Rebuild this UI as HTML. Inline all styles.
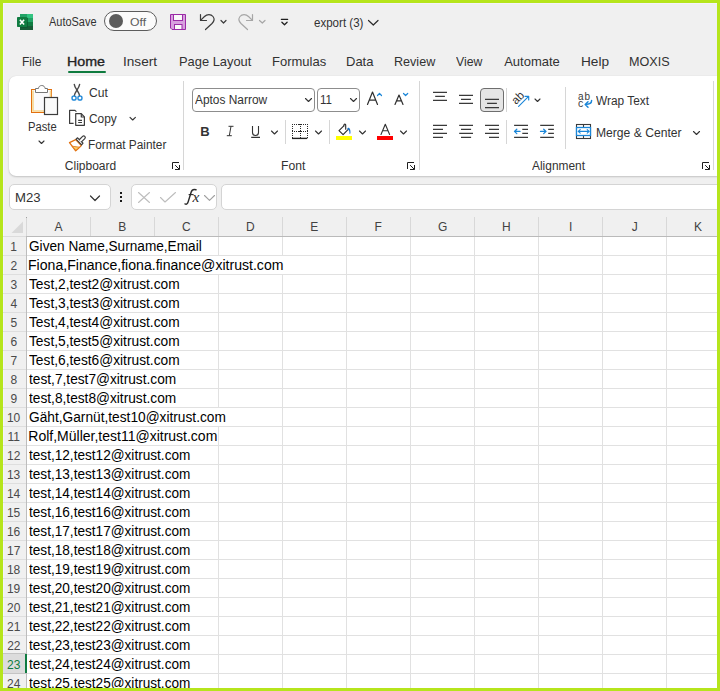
<!DOCTYPE html>
<html><head><meta charset="utf-8">
<style>
*{margin:0;padding:0;box-sizing:border-box}
html,body{width:720px;height:691px;overflow:hidden;background:#f0f0f0;font-family:"Liberation Sans",sans-serif;color:#242424}
.a{position:absolute}
.t{position:absolute;white-space:nowrap;line-height:1;transform-origin:0 0}
</style></head><body>
<div class="a" style="left:3px;top:3px;width:714px;height:1px;background:#f5f3fa"></div>
<div class="a" style="left:3px;top:3px;width:1px;height:685px;background:#f5f3fa"></div>
<div class="a" style="left:104px;top:11px;width:53px;height:20px;background:#fbfbfb;border-radius:10px"></div>
<div class="a" style="left:9px;top:76px;width:760px;height:100px;background:#fff;border-radius:7px;box-shadow:0 1px 2px rgba(0,0,0,0.18),0 0 1px rgba(0,0,0,0.12)"></div>
<div class="a" style="left:192px;top:88px;width:123px;height:24px;border:1px solid #8d8d8d;border-radius:4px;background:#fff"></div>
<div class="a" style="left:317px;top:88px;width:43px;height:24px;border:1px solid #8d8d8d;border-radius:4px;background:#fff"></div>
<div class="a" style="left:480px;top:88px;width:24px;height:24px;border:1px solid #6e6e6e;border-radius:4px;background:#e5e5e5"></div>
<div class="a" style="left:183px;top:81px;width:1px;height:89px;background:#d6d6d6"></div>
<div class="a" style="left:419px;top:81px;width:1px;height:89px;background:#d6d6d6"></div>
<div class="a" style="left:565px;top:87px;width:1px;height:62px;background:#d6d6d6"></div>
<div class="a" style="left:713px;top:81px;width:1px;height:89px;background:#d6d6d6"></div>
<div class="a" style="left:285px;top:120px;width:1px;height:24px;background:#d6d6d6"></div>
<div class="a" style="left:329px;top:120px;width:1px;height:24px;background:#d6d6d6"></div>
<div class="a" style="left:506px;top:88px;width:1px;height:24px;background:#d6d6d6"></div>
<div class="a" style="left:506px;top:120px;width:1px;height:24px;background:#d6d6d6"></div>
<div class="a" style="left:9px;top:184px;width:102px;height:26px;border:1px solid #d4d4d4;border-radius:5px;background:#fff"></div>
<div class="a" style="left:131px;top:184px;width:86px;height:26px;border:1px solid #d4d4d4;border-radius:5px;background:#fff"></div>
<div class="a" style="left:221px;top:184px;width:520px;height:26px;border:1px solid #d4d4d4;border-radius:5px;background:#fff"></div>
<div class="a" style="left:26px;top:236px;width:700px;height:460px;background:#fff"></div>
<div class="a" style="left:27px;top:255px;width:700px;height:1px;background:#e1e1e1"></div>
<div class="a" style="left:3px;top:255px;width:23px;height:1px;background:#dedede"></div>
<div class="a" style="left:27px;top:274px;width:700px;height:1px;background:#e1e1e1"></div>
<div class="a" style="left:3px;top:274px;width:23px;height:1px;background:#dedede"></div>
<div class="a" style="left:27px;top:293px;width:700px;height:1px;background:#e1e1e1"></div>
<div class="a" style="left:3px;top:293px;width:23px;height:1px;background:#dedede"></div>
<div class="a" style="left:27px;top:312px;width:700px;height:1px;background:#e1e1e1"></div>
<div class="a" style="left:3px;top:312px;width:23px;height:1px;background:#dedede"></div>
<div class="a" style="left:27px;top:331px;width:700px;height:1px;background:#e1e1e1"></div>
<div class="a" style="left:3px;top:331px;width:23px;height:1px;background:#dedede"></div>
<div class="a" style="left:27px;top:350px;width:700px;height:1px;background:#e1e1e1"></div>
<div class="a" style="left:3px;top:350px;width:23px;height:1px;background:#dedede"></div>
<div class="a" style="left:27px;top:369px;width:700px;height:1px;background:#e1e1e1"></div>
<div class="a" style="left:3px;top:369px;width:23px;height:1px;background:#dedede"></div>
<div class="a" style="left:27px;top:388px;width:700px;height:1px;background:#e1e1e1"></div>
<div class="a" style="left:3px;top:388px;width:23px;height:1px;background:#dedede"></div>
<div class="a" style="left:27px;top:407px;width:700px;height:1px;background:#e1e1e1"></div>
<div class="a" style="left:3px;top:407px;width:23px;height:1px;background:#dedede"></div>
<div class="a" style="left:27px;top:426px;width:700px;height:1px;background:#e1e1e1"></div>
<div class="a" style="left:3px;top:426px;width:23px;height:1px;background:#dedede"></div>
<div class="a" style="left:27px;top:445px;width:700px;height:1px;background:#e1e1e1"></div>
<div class="a" style="left:3px;top:445px;width:23px;height:1px;background:#dedede"></div>
<div class="a" style="left:27px;top:464px;width:700px;height:1px;background:#e1e1e1"></div>
<div class="a" style="left:3px;top:464px;width:23px;height:1px;background:#dedede"></div>
<div class="a" style="left:27px;top:483px;width:700px;height:1px;background:#e1e1e1"></div>
<div class="a" style="left:3px;top:483px;width:23px;height:1px;background:#dedede"></div>
<div class="a" style="left:27px;top:502px;width:700px;height:1px;background:#e1e1e1"></div>
<div class="a" style="left:3px;top:502px;width:23px;height:1px;background:#dedede"></div>
<div class="a" style="left:27px;top:521px;width:700px;height:1px;background:#e1e1e1"></div>
<div class="a" style="left:3px;top:521px;width:23px;height:1px;background:#dedede"></div>
<div class="a" style="left:27px;top:540px;width:700px;height:1px;background:#e1e1e1"></div>
<div class="a" style="left:3px;top:540px;width:23px;height:1px;background:#dedede"></div>
<div class="a" style="left:27px;top:559px;width:700px;height:1px;background:#e1e1e1"></div>
<div class="a" style="left:3px;top:559px;width:23px;height:1px;background:#dedede"></div>
<div class="a" style="left:27px;top:578px;width:700px;height:1px;background:#e1e1e1"></div>
<div class="a" style="left:3px;top:578px;width:23px;height:1px;background:#dedede"></div>
<div class="a" style="left:27px;top:597px;width:700px;height:1px;background:#e1e1e1"></div>
<div class="a" style="left:3px;top:597px;width:23px;height:1px;background:#dedede"></div>
<div class="a" style="left:27px;top:616px;width:700px;height:1px;background:#e1e1e1"></div>
<div class="a" style="left:3px;top:616px;width:23px;height:1px;background:#dedede"></div>
<div class="a" style="left:27px;top:635px;width:700px;height:1px;background:#e1e1e1"></div>
<div class="a" style="left:3px;top:635px;width:23px;height:1px;background:#dedede"></div>
<div class="a" style="left:27px;top:654px;width:700px;height:1px;background:#e1e1e1"></div>
<div class="a" style="left:3px;top:654px;width:23px;height:1px;background:#dedede"></div>
<div class="a" style="left:27px;top:673px;width:700px;height:1px;background:#e1e1e1"></div>
<div class="a" style="left:3px;top:673px;width:23px;height:1px;background:#dedede"></div>
<div class="a" style="left:27px;top:692px;width:700px;height:1px;background:#e1e1e1"></div>
<div class="a" style="left:3px;top:692px;width:23px;height:1px;background:#dedede"></div>
<div class="a" style="left:90px;top:217px;width:1px;height:19px;background:#d8d8d8"></div>
<div class="a" style="left:154px;top:217px;width:1px;height:19px;background:#d8d8d8"></div>
<div class="a" style="left:218px;top:217px;width:1px;height:19px;background:#d8d8d8"></div>
<div class="a" style="left:218px;top:237px;width:1px;height:18px;background:#e1e1e1"></div>
<div class="a" style="left:218px;top:275px;width:1px;height:18px;background:#e1e1e1"></div>
<div class="a" style="left:218px;top:294px;width:1px;height:18px;background:#e1e1e1"></div>
<div class="a" style="left:218px;top:313px;width:1px;height:18px;background:#e1e1e1"></div>
<div class="a" style="left:218px;top:332px;width:1px;height:18px;background:#e1e1e1"></div>
<div class="a" style="left:218px;top:351px;width:1px;height:18px;background:#e1e1e1"></div>
<div class="a" style="left:218px;top:370px;width:1px;height:18px;background:#e1e1e1"></div>
<div class="a" style="left:218px;top:389px;width:1px;height:18px;background:#e1e1e1"></div>
<div class="a" style="left:218px;top:427px;width:1px;height:18px;background:#e1e1e1"></div>
<div class="a" style="left:218px;top:446px;width:1px;height:18px;background:#e1e1e1"></div>
<div class="a" style="left:218px;top:465px;width:1px;height:18px;background:#e1e1e1"></div>
<div class="a" style="left:218px;top:484px;width:1px;height:18px;background:#e1e1e1"></div>
<div class="a" style="left:218px;top:503px;width:1px;height:18px;background:#e1e1e1"></div>
<div class="a" style="left:218px;top:522px;width:1px;height:18px;background:#e1e1e1"></div>
<div class="a" style="left:218px;top:541px;width:1px;height:18px;background:#e1e1e1"></div>
<div class="a" style="left:218px;top:560px;width:1px;height:18px;background:#e1e1e1"></div>
<div class="a" style="left:218px;top:579px;width:1px;height:18px;background:#e1e1e1"></div>
<div class="a" style="left:218px;top:598px;width:1px;height:18px;background:#e1e1e1"></div>
<div class="a" style="left:218px;top:617px;width:1px;height:18px;background:#e1e1e1"></div>
<div class="a" style="left:218px;top:636px;width:1px;height:18px;background:#e1e1e1"></div>
<div class="a" style="left:218px;top:655px;width:1px;height:18px;background:#e1e1e1"></div>
<div class="a" style="left:218px;top:674px;width:1px;height:18px;background:#e1e1e1"></div>
<div class="a" style="left:282px;top:217px;width:1px;height:19px;background:#d8d8d8"></div>
<div class="a" style="left:282px;top:237px;width:1px;height:18px;background:#e1e1e1"></div>
<div class="a" style="left:282px;top:275px;width:1px;height:18px;background:#e1e1e1"></div>
<div class="a" style="left:282px;top:294px;width:1px;height:18px;background:#e1e1e1"></div>
<div class="a" style="left:282px;top:313px;width:1px;height:18px;background:#e1e1e1"></div>
<div class="a" style="left:282px;top:332px;width:1px;height:18px;background:#e1e1e1"></div>
<div class="a" style="left:282px;top:351px;width:1px;height:18px;background:#e1e1e1"></div>
<div class="a" style="left:282px;top:370px;width:1px;height:18px;background:#e1e1e1"></div>
<div class="a" style="left:282px;top:389px;width:1px;height:18px;background:#e1e1e1"></div>
<div class="a" style="left:282px;top:408px;width:1px;height:18px;background:#e1e1e1"></div>
<div class="a" style="left:282px;top:427px;width:1px;height:18px;background:#e1e1e1"></div>
<div class="a" style="left:282px;top:446px;width:1px;height:18px;background:#e1e1e1"></div>
<div class="a" style="left:282px;top:465px;width:1px;height:18px;background:#e1e1e1"></div>
<div class="a" style="left:282px;top:484px;width:1px;height:18px;background:#e1e1e1"></div>
<div class="a" style="left:282px;top:503px;width:1px;height:18px;background:#e1e1e1"></div>
<div class="a" style="left:282px;top:522px;width:1px;height:18px;background:#e1e1e1"></div>
<div class="a" style="left:282px;top:541px;width:1px;height:18px;background:#e1e1e1"></div>
<div class="a" style="left:282px;top:560px;width:1px;height:18px;background:#e1e1e1"></div>
<div class="a" style="left:282px;top:579px;width:1px;height:18px;background:#e1e1e1"></div>
<div class="a" style="left:282px;top:598px;width:1px;height:18px;background:#e1e1e1"></div>
<div class="a" style="left:282px;top:617px;width:1px;height:18px;background:#e1e1e1"></div>
<div class="a" style="left:282px;top:636px;width:1px;height:18px;background:#e1e1e1"></div>
<div class="a" style="left:282px;top:655px;width:1px;height:18px;background:#e1e1e1"></div>
<div class="a" style="left:282px;top:674px;width:1px;height:18px;background:#e1e1e1"></div>
<div class="a" style="left:346px;top:217px;width:1px;height:19px;background:#d8d8d8"></div>
<div class="a" style="left:346px;top:237px;width:1px;height:18px;background:#e1e1e1"></div>
<div class="a" style="left:346px;top:256px;width:1px;height:18px;background:#e1e1e1"></div>
<div class="a" style="left:346px;top:275px;width:1px;height:18px;background:#e1e1e1"></div>
<div class="a" style="left:346px;top:294px;width:1px;height:18px;background:#e1e1e1"></div>
<div class="a" style="left:346px;top:313px;width:1px;height:18px;background:#e1e1e1"></div>
<div class="a" style="left:346px;top:332px;width:1px;height:18px;background:#e1e1e1"></div>
<div class="a" style="left:346px;top:351px;width:1px;height:18px;background:#e1e1e1"></div>
<div class="a" style="left:346px;top:370px;width:1px;height:18px;background:#e1e1e1"></div>
<div class="a" style="left:346px;top:389px;width:1px;height:18px;background:#e1e1e1"></div>
<div class="a" style="left:346px;top:408px;width:1px;height:18px;background:#e1e1e1"></div>
<div class="a" style="left:346px;top:427px;width:1px;height:18px;background:#e1e1e1"></div>
<div class="a" style="left:346px;top:446px;width:1px;height:18px;background:#e1e1e1"></div>
<div class="a" style="left:346px;top:465px;width:1px;height:18px;background:#e1e1e1"></div>
<div class="a" style="left:346px;top:484px;width:1px;height:18px;background:#e1e1e1"></div>
<div class="a" style="left:346px;top:503px;width:1px;height:18px;background:#e1e1e1"></div>
<div class="a" style="left:346px;top:522px;width:1px;height:18px;background:#e1e1e1"></div>
<div class="a" style="left:346px;top:541px;width:1px;height:18px;background:#e1e1e1"></div>
<div class="a" style="left:346px;top:560px;width:1px;height:18px;background:#e1e1e1"></div>
<div class="a" style="left:346px;top:579px;width:1px;height:18px;background:#e1e1e1"></div>
<div class="a" style="left:346px;top:598px;width:1px;height:18px;background:#e1e1e1"></div>
<div class="a" style="left:346px;top:617px;width:1px;height:18px;background:#e1e1e1"></div>
<div class="a" style="left:346px;top:636px;width:1px;height:18px;background:#e1e1e1"></div>
<div class="a" style="left:346px;top:655px;width:1px;height:18px;background:#e1e1e1"></div>
<div class="a" style="left:346px;top:674px;width:1px;height:18px;background:#e1e1e1"></div>
<div class="a" style="left:410px;top:217px;width:1px;height:19px;background:#d8d8d8"></div>
<div class="a" style="left:410px;top:237px;width:1px;height:18px;background:#e1e1e1"></div>
<div class="a" style="left:410px;top:256px;width:1px;height:18px;background:#e1e1e1"></div>
<div class="a" style="left:410px;top:275px;width:1px;height:18px;background:#e1e1e1"></div>
<div class="a" style="left:410px;top:294px;width:1px;height:18px;background:#e1e1e1"></div>
<div class="a" style="left:410px;top:313px;width:1px;height:18px;background:#e1e1e1"></div>
<div class="a" style="left:410px;top:332px;width:1px;height:18px;background:#e1e1e1"></div>
<div class="a" style="left:410px;top:351px;width:1px;height:18px;background:#e1e1e1"></div>
<div class="a" style="left:410px;top:370px;width:1px;height:18px;background:#e1e1e1"></div>
<div class="a" style="left:410px;top:389px;width:1px;height:18px;background:#e1e1e1"></div>
<div class="a" style="left:410px;top:408px;width:1px;height:18px;background:#e1e1e1"></div>
<div class="a" style="left:410px;top:427px;width:1px;height:18px;background:#e1e1e1"></div>
<div class="a" style="left:410px;top:446px;width:1px;height:18px;background:#e1e1e1"></div>
<div class="a" style="left:410px;top:465px;width:1px;height:18px;background:#e1e1e1"></div>
<div class="a" style="left:410px;top:484px;width:1px;height:18px;background:#e1e1e1"></div>
<div class="a" style="left:410px;top:503px;width:1px;height:18px;background:#e1e1e1"></div>
<div class="a" style="left:410px;top:522px;width:1px;height:18px;background:#e1e1e1"></div>
<div class="a" style="left:410px;top:541px;width:1px;height:18px;background:#e1e1e1"></div>
<div class="a" style="left:410px;top:560px;width:1px;height:18px;background:#e1e1e1"></div>
<div class="a" style="left:410px;top:579px;width:1px;height:18px;background:#e1e1e1"></div>
<div class="a" style="left:410px;top:598px;width:1px;height:18px;background:#e1e1e1"></div>
<div class="a" style="left:410px;top:617px;width:1px;height:18px;background:#e1e1e1"></div>
<div class="a" style="left:410px;top:636px;width:1px;height:18px;background:#e1e1e1"></div>
<div class="a" style="left:410px;top:655px;width:1px;height:18px;background:#e1e1e1"></div>
<div class="a" style="left:410px;top:674px;width:1px;height:18px;background:#e1e1e1"></div>
<div class="a" style="left:474px;top:217px;width:1px;height:19px;background:#d8d8d8"></div>
<div class="a" style="left:474px;top:237px;width:1px;height:18px;background:#e1e1e1"></div>
<div class="a" style="left:474px;top:256px;width:1px;height:18px;background:#e1e1e1"></div>
<div class="a" style="left:474px;top:275px;width:1px;height:18px;background:#e1e1e1"></div>
<div class="a" style="left:474px;top:294px;width:1px;height:18px;background:#e1e1e1"></div>
<div class="a" style="left:474px;top:313px;width:1px;height:18px;background:#e1e1e1"></div>
<div class="a" style="left:474px;top:332px;width:1px;height:18px;background:#e1e1e1"></div>
<div class="a" style="left:474px;top:351px;width:1px;height:18px;background:#e1e1e1"></div>
<div class="a" style="left:474px;top:370px;width:1px;height:18px;background:#e1e1e1"></div>
<div class="a" style="left:474px;top:389px;width:1px;height:18px;background:#e1e1e1"></div>
<div class="a" style="left:474px;top:408px;width:1px;height:18px;background:#e1e1e1"></div>
<div class="a" style="left:474px;top:427px;width:1px;height:18px;background:#e1e1e1"></div>
<div class="a" style="left:474px;top:446px;width:1px;height:18px;background:#e1e1e1"></div>
<div class="a" style="left:474px;top:465px;width:1px;height:18px;background:#e1e1e1"></div>
<div class="a" style="left:474px;top:484px;width:1px;height:18px;background:#e1e1e1"></div>
<div class="a" style="left:474px;top:503px;width:1px;height:18px;background:#e1e1e1"></div>
<div class="a" style="left:474px;top:522px;width:1px;height:18px;background:#e1e1e1"></div>
<div class="a" style="left:474px;top:541px;width:1px;height:18px;background:#e1e1e1"></div>
<div class="a" style="left:474px;top:560px;width:1px;height:18px;background:#e1e1e1"></div>
<div class="a" style="left:474px;top:579px;width:1px;height:18px;background:#e1e1e1"></div>
<div class="a" style="left:474px;top:598px;width:1px;height:18px;background:#e1e1e1"></div>
<div class="a" style="left:474px;top:617px;width:1px;height:18px;background:#e1e1e1"></div>
<div class="a" style="left:474px;top:636px;width:1px;height:18px;background:#e1e1e1"></div>
<div class="a" style="left:474px;top:655px;width:1px;height:18px;background:#e1e1e1"></div>
<div class="a" style="left:474px;top:674px;width:1px;height:18px;background:#e1e1e1"></div>
<div class="a" style="left:538px;top:217px;width:1px;height:19px;background:#d8d8d8"></div>
<div class="a" style="left:538px;top:237px;width:1px;height:18px;background:#e1e1e1"></div>
<div class="a" style="left:538px;top:256px;width:1px;height:18px;background:#e1e1e1"></div>
<div class="a" style="left:538px;top:275px;width:1px;height:18px;background:#e1e1e1"></div>
<div class="a" style="left:538px;top:294px;width:1px;height:18px;background:#e1e1e1"></div>
<div class="a" style="left:538px;top:313px;width:1px;height:18px;background:#e1e1e1"></div>
<div class="a" style="left:538px;top:332px;width:1px;height:18px;background:#e1e1e1"></div>
<div class="a" style="left:538px;top:351px;width:1px;height:18px;background:#e1e1e1"></div>
<div class="a" style="left:538px;top:370px;width:1px;height:18px;background:#e1e1e1"></div>
<div class="a" style="left:538px;top:389px;width:1px;height:18px;background:#e1e1e1"></div>
<div class="a" style="left:538px;top:408px;width:1px;height:18px;background:#e1e1e1"></div>
<div class="a" style="left:538px;top:427px;width:1px;height:18px;background:#e1e1e1"></div>
<div class="a" style="left:538px;top:446px;width:1px;height:18px;background:#e1e1e1"></div>
<div class="a" style="left:538px;top:465px;width:1px;height:18px;background:#e1e1e1"></div>
<div class="a" style="left:538px;top:484px;width:1px;height:18px;background:#e1e1e1"></div>
<div class="a" style="left:538px;top:503px;width:1px;height:18px;background:#e1e1e1"></div>
<div class="a" style="left:538px;top:522px;width:1px;height:18px;background:#e1e1e1"></div>
<div class="a" style="left:538px;top:541px;width:1px;height:18px;background:#e1e1e1"></div>
<div class="a" style="left:538px;top:560px;width:1px;height:18px;background:#e1e1e1"></div>
<div class="a" style="left:538px;top:579px;width:1px;height:18px;background:#e1e1e1"></div>
<div class="a" style="left:538px;top:598px;width:1px;height:18px;background:#e1e1e1"></div>
<div class="a" style="left:538px;top:617px;width:1px;height:18px;background:#e1e1e1"></div>
<div class="a" style="left:538px;top:636px;width:1px;height:18px;background:#e1e1e1"></div>
<div class="a" style="left:538px;top:655px;width:1px;height:18px;background:#e1e1e1"></div>
<div class="a" style="left:538px;top:674px;width:1px;height:18px;background:#e1e1e1"></div>
<div class="a" style="left:602px;top:217px;width:1px;height:19px;background:#d8d8d8"></div>
<div class="a" style="left:602px;top:237px;width:1px;height:18px;background:#e1e1e1"></div>
<div class="a" style="left:602px;top:256px;width:1px;height:18px;background:#e1e1e1"></div>
<div class="a" style="left:602px;top:275px;width:1px;height:18px;background:#e1e1e1"></div>
<div class="a" style="left:602px;top:294px;width:1px;height:18px;background:#e1e1e1"></div>
<div class="a" style="left:602px;top:313px;width:1px;height:18px;background:#e1e1e1"></div>
<div class="a" style="left:602px;top:332px;width:1px;height:18px;background:#e1e1e1"></div>
<div class="a" style="left:602px;top:351px;width:1px;height:18px;background:#e1e1e1"></div>
<div class="a" style="left:602px;top:370px;width:1px;height:18px;background:#e1e1e1"></div>
<div class="a" style="left:602px;top:389px;width:1px;height:18px;background:#e1e1e1"></div>
<div class="a" style="left:602px;top:408px;width:1px;height:18px;background:#e1e1e1"></div>
<div class="a" style="left:602px;top:427px;width:1px;height:18px;background:#e1e1e1"></div>
<div class="a" style="left:602px;top:446px;width:1px;height:18px;background:#e1e1e1"></div>
<div class="a" style="left:602px;top:465px;width:1px;height:18px;background:#e1e1e1"></div>
<div class="a" style="left:602px;top:484px;width:1px;height:18px;background:#e1e1e1"></div>
<div class="a" style="left:602px;top:503px;width:1px;height:18px;background:#e1e1e1"></div>
<div class="a" style="left:602px;top:522px;width:1px;height:18px;background:#e1e1e1"></div>
<div class="a" style="left:602px;top:541px;width:1px;height:18px;background:#e1e1e1"></div>
<div class="a" style="left:602px;top:560px;width:1px;height:18px;background:#e1e1e1"></div>
<div class="a" style="left:602px;top:579px;width:1px;height:18px;background:#e1e1e1"></div>
<div class="a" style="left:602px;top:598px;width:1px;height:18px;background:#e1e1e1"></div>
<div class="a" style="left:602px;top:617px;width:1px;height:18px;background:#e1e1e1"></div>
<div class="a" style="left:602px;top:636px;width:1px;height:18px;background:#e1e1e1"></div>
<div class="a" style="left:602px;top:655px;width:1px;height:18px;background:#e1e1e1"></div>
<div class="a" style="left:602px;top:674px;width:1px;height:18px;background:#e1e1e1"></div>
<div class="a" style="left:666px;top:217px;width:1px;height:19px;background:#d8d8d8"></div>
<div class="a" style="left:666px;top:237px;width:1px;height:18px;background:#e1e1e1"></div>
<div class="a" style="left:666px;top:256px;width:1px;height:18px;background:#e1e1e1"></div>
<div class="a" style="left:666px;top:275px;width:1px;height:18px;background:#e1e1e1"></div>
<div class="a" style="left:666px;top:294px;width:1px;height:18px;background:#e1e1e1"></div>
<div class="a" style="left:666px;top:313px;width:1px;height:18px;background:#e1e1e1"></div>
<div class="a" style="left:666px;top:332px;width:1px;height:18px;background:#e1e1e1"></div>
<div class="a" style="left:666px;top:351px;width:1px;height:18px;background:#e1e1e1"></div>
<div class="a" style="left:666px;top:370px;width:1px;height:18px;background:#e1e1e1"></div>
<div class="a" style="left:666px;top:389px;width:1px;height:18px;background:#e1e1e1"></div>
<div class="a" style="left:666px;top:408px;width:1px;height:18px;background:#e1e1e1"></div>
<div class="a" style="left:666px;top:427px;width:1px;height:18px;background:#e1e1e1"></div>
<div class="a" style="left:666px;top:446px;width:1px;height:18px;background:#e1e1e1"></div>
<div class="a" style="left:666px;top:465px;width:1px;height:18px;background:#e1e1e1"></div>
<div class="a" style="left:666px;top:484px;width:1px;height:18px;background:#e1e1e1"></div>
<div class="a" style="left:666px;top:503px;width:1px;height:18px;background:#e1e1e1"></div>
<div class="a" style="left:666px;top:522px;width:1px;height:18px;background:#e1e1e1"></div>
<div class="a" style="left:666px;top:541px;width:1px;height:18px;background:#e1e1e1"></div>
<div class="a" style="left:666px;top:560px;width:1px;height:18px;background:#e1e1e1"></div>
<div class="a" style="left:666px;top:579px;width:1px;height:18px;background:#e1e1e1"></div>
<div class="a" style="left:666px;top:598px;width:1px;height:18px;background:#e1e1e1"></div>
<div class="a" style="left:666px;top:617px;width:1px;height:18px;background:#e1e1e1"></div>
<div class="a" style="left:666px;top:636px;width:1px;height:18px;background:#e1e1e1"></div>
<div class="a" style="left:666px;top:655px;width:1px;height:18px;background:#e1e1e1"></div>
<div class="a" style="left:666px;top:674px;width:1px;height:18px;background:#e1e1e1"></div>
<div class="a" style="left:730px;top:217px;width:1px;height:19px;background:#d8d8d8"></div>
<div class="a" style="left:730px;top:237px;width:1px;height:18px;background:#e1e1e1"></div>
<div class="a" style="left:730px;top:256px;width:1px;height:18px;background:#e1e1e1"></div>
<div class="a" style="left:730px;top:275px;width:1px;height:18px;background:#e1e1e1"></div>
<div class="a" style="left:730px;top:294px;width:1px;height:18px;background:#e1e1e1"></div>
<div class="a" style="left:730px;top:313px;width:1px;height:18px;background:#e1e1e1"></div>
<div class="a" style="left:730px;top:332px;width:1px;height:18px;background:#e1e1e1"></div>
<div class="a" style="left:730px;top:351px;width:1px;height:18px;background:#e1e1e1"></div>
<div class="a" style="left:730px;top:370px;width:1px;height:18px;background:#e1e1e1"></div>
<div class="a" style="left:730px;top:389px;width:1px;height:18px;background:#e1e1e1"></div>
<div class="a" style="left:730px;top:408px;width:1px;height:18px;background:#e1e1e1"></div>
<div class="a" style="left:730px;top:427px;width:1px;height:18px;background:#e1e1e1"></div>
<div class="a" style="left:730px;top:446px;width:1px;height:18px;background:#e1e1e1"></div>
<div class="a" style="left:730px;top:465px;width:1px;height:18px;background:#e1e1e1"></div>
<div class="a" style="left:730px;top:484px;width:1px;height:18px;background:#e1e1e1"></div>
<div class="a" style="left:730px;top:503px;width:1px;height:18px;background:#e1e1e1"></div>
<div class="a" style="left:730px;top:522px;width:1px;height:18px;background:#e1e1e1"></div>
<div class="a" style="left:730px;top:541px;width:1px;height:18px;background:#e1e1e1"></div>
<div class="a" style="left:730px;top:560px;width:1px;height:18px;background:#e1e1e1"></div>
<div class="a" style="left:730px;top:579px;width:1px;height:18px;background:#e1e1e1"></div>
<div class="a" style="left:730px;top:598px;width:1px;height:18px;background:#e1e1e1"></div>
<div class="a" style="left:730px;top:617px;width:1px;height:18px;background:#e1e1e1"></div>
<div class="a" style="left:730px;top:636px;width:1px;height:18px;background:#e1e1e1"></div>
<div class="a" style="left:730px;top:655px;width:1px;height:18px;background:#e1e1e1"></div>
<div class="a" style="left:730px;top:674px;width:1px;height:18px;background:#e1e1e1"></div>
<div class="a" style="left:3px;top:236px;width:23px;height:1px;background:#dcdcdc"></div>
<div class="a" style="left:26px;top:236px;width:700px;height:1px;background:#bababa"></div>
<div class="a" style="left:26px;top:217px;width:1px;height:19px;background:#d8d8d8"></div>
<div class="a" style="left:26px;top:217px;width:1px;height:1px;background:#a0a0a0"></div>
<div class="a" style="left:26px;top:237px;width:1px;height:460px;background:#bdbdbd"></div>
<div class="a" style="left:3px;top:654px;width:23px;height:19px;background:#dcdcdc"></div>
<div class="a" style="left:3px;top:653px;width:23px;height:1px;background:#c4c4c4"></div>
<div class="a" style="left:3px;top:673px;width:23px;height:1px;background:#c4c4c4"></div>
<div class="a" style="left:25px;top:654px;width:2px;height:19px;background:#107c41"></div>
<div class="t" style="left:49.00px;top:15.84px;font-size:12px;color:#323232;transform:scaleX(0.9126)">AutoSave</div>
<div class="t" style="left:130.25px;top:16.69px;font-size:11px;color:#5c5c5c;transform:scaleX(1.1071)">Off</div>
<div class="t" style="left:314.27px;top:16.59px;font-size:12px;color:#323232;transform:scaleX(0.9622)">export (3)</div>
<div class="t" style="left:22.48px;top:54.99px;font-size:13px;color:#323232;transform:scaleX(0.9231)">File</div>
<div class="t" style="left:67.31px;top:54.99px;font-size:13px;color:#242424;-webkit-text-stroke:0.35px #242424;transform:scaleX(1.0947)">Home</div>
<div class="t" style="left:122.69px;top:54.99px;font-size:13px;color:#323232;transform:scaleX(1.0464)">Insert</div>
<div class="t" style="left:178.71px;top:54.99px;font-size:13px;color:#323232;transform:scaleX(0.9903)">Page Layout</div>
<div class="t" style="left:272.00px;top:54.99px;font-size:13px;color:#323232">Formulas</div>
<div class="t" style="left:346.00px;top:54.99px;font-size:13px;color:#323232">Data</div>
<div class="t" style="left:394.03px;top:54.99px;font-size:13px;color:#323232;transform:scaleX(0.9677)">Review</div>
<div class="t" style="left:455.60px;top:54.99px;font-size:13px;color:#323232;transform:scaleX(0.9429)">View</div>
<div class="t" style="left:504.20px;top:54.99px;font-size:13px;color:#323232">Automate</div>
<div class="t" style="left:580.95px;top:54.99px;font-size:13px;color:#323232;transform:scaleX(1.0495)">Help</div>
<div class="t" style="left:628.53px;top:54.99px;font-size:13px;color:#323232;transform:scaleX(0.9704)">MOXIS</div>
<div class="t" style="left:27.77px;top:120.64px;font-size:12px;color:#323232;transform:scaleX(0.9333)">Paste</div>
<div class="t" style="left:88.90px;top:87.04px;font-size:12px;color:#323232;transform:scaleX(1.0082)">Cut</div>
<div class="t" style="left:88.90px;top:113.34px;font-size:12px;color:#323232;transform:scaleX(0.9927)">Copy</div>
<div class="t" style="left:88.41px;top:139.04px;font-size:12px;color:#323232;transform:scaleX(0.9879)">Format Painter</div>
<div class="t" style="left:64.80px;top:159.84px;font-size:12px;color:#323232">Clipboard</div>
<div class="t" style="left:195.30px;top:93.64px;font-size:12px;color:#323232;transform:scaleX(0.9924)">Aptos Narrow</div>
<div class="t" style="left:319.98px;top:93.64px;font-size:12px;color:#323232;transform:scaleX(0.9600)">11</div>
<div class="t" style="left:281.39px;top:159.54px;font-size:12px;color:#323232;transform:scaleX(1.0130)">Font</div>
<div class="t" style="left:531.70px;top:159.84px;font-size:12px;color:#323232;transform:scaleX(0.9934)">Alignment</div>
<div class="t" style="left:596.00px;top:94.74px;font-size:12px;color:#323232;transform:scaleX(0.9888)">Wrap Text</div>
<div class="t" style="left:595.69px;top:127.14px;font-size:12px;color:#323232;transform:scaleX(1.0096)">Merge &amp; Center</div>
<div class="t" style="left:15.29px;top:190.69px;font-size:13px;color:#323232;transform:scaleX(1.0105)">M23</div>
<div class="t" style="left:54.50px;top:220.59px;font-size:12px;color:#424242">A</div>
<div class="t" style="left:118.25px;top:220.59px;font-size:12px;color:#424242">B</div>
<div class="t" style="left:182.12px;top:220.59px;font-size:12px;color:#424242">C</div>
<div class="t" style="left:245.88px;top:220.59px;font-size:12px;color:#424242">D</div>
<div class="t" style="left:310.25px;top:220.59px;font-size:12px;color:#424242">E</div>
<div class="t" style="left:374.50px;top:220.59px;font-size:12px;color:#424242">F</div>
<div class="t" style="left:438.00px;top:220.59px;font-size:12px;color:#424242">G</div>
<div class="t" style="left:502.12px;top:220.59px;font-size:12px;color:#424242">H</div>
<div class="t" style="left:568.88px;top:220.59px;font-size:12px;color:#424242">I</div>
<div class="t" style="left:631.75px;top:220.59px;font-size:12px;color:#424242">J</div>
<div class="t" style="left:694.00px;top:220.59px;font-size:12px;color:#424242">K</div>
<div class="t" style="left:10.30px;top:240.84px;font-size:12px;color:#4a4a4a">1</div>
<div class="t" style="left:28.57px;top:239.15px;font-size:14px;color:#000000;transform:scaleX(0.9735)">Given Name,Surname,Email</div>
<div class="t" style="left:10.43px;top:259.84px;font-size:12px;color:#4a4a4a">2</div>
<div class="t" style="left:28.29px;top:258.15px;font-size:14px;color:#000000;transform:scaleX(1.0063)">Fiona,Finance,fiona.finance@xitrust.com</div>
<div class="t" style="left:10.43px;top:278.84px;font-size:12px;color:#4a4a4a">3</div>
<div class="t" style="left:29.05px;top:277.15px;font-size:14px;color:#000000;transform:scaleX(0.9813)">Test,2,test2@xitrust.com</div>
<div class="t" style="left:10.43px;top:297.84px;font-size:12px;color:#4a4a4a">4</div>
<div class="t" style="left:29.05px;top:296.15px;font-size:14px;color:#000000;transform:scaleX(0.9813)">Test,3,test3@xitrust.com</div>
<div class="t" style="left:10.43px;top:316.84px;font-size:12px;color:#4a4a4a">5</div>
<div class="t" style="left:29.05px;top:315.15px;font-size:14px;color:#000000;transform:scaleX(0.9813)">Test,4,test4@xitrust.com</div>
<div class="t" style="left:10.43px;top:335.84px;font-size:12px;color:#4a4a4a">6</div>
<div class="t" style="left:29.05px;top:334.15px;font-size:14px;color:#000000;transform:scaleX(0.9813)">Test,5,test5@xitrust.com</div>
<div class="t" style="left:10.43px;top:354.84px;font-size:12px;color:#4a4a4a">7</div>
<div class="t" style="left:29.05px;top:353.15px;font-size:14px;color:#000000;transform:scaleX(0.9813)">Test,6,test6@xitrust.com</div>
<div class="t" style="left:10.43px;top:373.84px;font-size:12px;color:#4a4a4a">8</div>
<div class="t" style="left:29.06px;top:372.15px;font-size:14px;color:#000000;transform:scaleX(0.9789)">test,7,test7@xitrust.com</div>
<div class="t" style="left:10.43px;top:392.84px;font-size:12px;color:#4a4a4a">9</div>
<div class="t" style="left:29.06px;top:391.15px;font-size:14px;color:#000000;transform:scaleX(0.9789)">test,8,test8@xitrust.com</div>
<div class="t" style="left:6.93px;top:411.84px;font-size:12px;color:#4a4a4a">10</div>
<div class="t" style="left:28.57px;top:410.15px;font-size:14px;color:#000000;transform:scaleX(0.9797)">Gäht,Garnüt,test10@xitrust.com</div>
<div class="t" style="left:7.43px;top:430.84px;font-size:12px;color:#4a4a4a">11</div>
<div class="t" style="left:28.30px;top:429.15px;font-size:14px;color:#000000">Rolf,Müller,test11@xitrust.com</div>
<div class="t" style="left:7.05px;top:449.84px;font-size:12px;color:#4a4a4a">12</div>
<div class="t" style="left:29.06px;top:448.15px;font-size:14px;color:#000000;transform:scaleX(0.9724)">test,12,test12@xitrust.com</div>
<div class="t" style="left:6.93px;top:468.84px;font-size:12px;color:#4a4a4a">13</div>
<div class="t" style="left:29.06px;top:467.15px;font-size:14px;color:#000000;transform:scaleX(0.9724)">test,13,test13@xitrust.com</div>
<div class="t" style="left:6.93px;top:487.84px;font-size:12px;color:#4a4a4a">14</div>
<div class="t" style="left:29.06px;top:486.15px;font-size:14px;color:#000000;transform:scaleX(0.9724)">test,14,test14@xitrust.com</div>
<div class="t" style="left:6.93px;top:506.84px;font-size:12px;color:#4a4a4a">15</div>
<div class="t" style="left:29.06px;top:505.15px;font-size:14px;color:#000000;transform:scaleX(0.9724)">test,16,test16@xitrust.com</div>
<div class="t" style="left:6.93px;top:525.84px;font-size:12px;color:#4a4a4a">16</div>
<div class="t" style="left:29.06px;top:524.15px;font-size:14px;color:#000000;transform:scaleX(0.9724)">test,17,test17@xitrust.com</div>
<div class="t" style="left:7.05px;top:544.84px;font-size:12px;color:#4a4a4a">17</div>
<div class="t" style="left:29.06px;top:543.15px;font-size:14px;color:#000000;transform:scaleX(0.9724)">test,18,test18@xitrust.com</div>
<div class="t" style="left:6.93px;top:563.84px;font-size:12px;color:#4a4a4a">18</div>
<div class="t" style="left:29.06px;top:562.15px;font-size:14px;color:#000000;transform:scaleX(0.9724)">test,19,test19@xitrust.com</div>
<div class="t" style="left:6.93px;top:582.84px;font-size:12px;color:#4a4a4a">19</div>
<div class="t" style="left:29.06px;top:581.15px;font-size:14px;color:#000000;transform:scaleX(0.9724)">test,20,test20@xitrust.com</div>
<div class="t" style="left:7.05px;top:601.84px;font-size:12px;color:#4a4a4a">20</div>
<div class="t" style="left:29.06px;top:600.15px;font-size:14px;color:#000000;transform:scaleX(0.9724)">test,21,test21@xitrust.com</div>
<div class="t" style="left:7.05px;top:620.84px;font-size:12px;color:#4a4a4a">21</div>
<div class="t" style="left:29.06px;top:619.15px;font-size:14px;color:#000000;transform:scaleX(0.9724)">test,22,test22@xitrust.com</div>
<div class="t" style="left:7.18px;top:639.84px;font-size:12px;color:#4a4a4a">22</div>
<div class="t" style="left:29.06px;top:638.15px;font-size:14px;color:#000000;transform:scaleX(0.9724)">test,23,test23@xitrust.com</div>
<div class="t" style="left:7.05px;top:658.84px;font-size:12px;color:#107c41">23</div>
<div class="t" style="left:29.06px;top:657.15px;font-size:14px;color:#000000;transform:scaleX(0.9724)">test,24,test24@xitrust.com</div>
<div class="t" style="left:7.05px;top:677.84px;font-size:12px;color:#4a4a4a">24</div>
<div class="t" style="left:29.06px;top:676.15px;font-size:14px;color:#000000;transform:scaleX(0.9724)">test,25,test25@xitrust.com</div>
<svg style="position:absolute;left:0;top:0" width="720" height="691" viewBox="0 0 720 691">
<!-- excel logo -->
<rect x="20" y="14" width="13" height="16" rx="1" fill="#185c37"/>
<rect x="20" y="14" width="13" height="4" fill="#33c481"/>
<rect x="20" y="14" width="7" height="4" fill="#21a366"/>
<rect x="20" y="18" width="13" height="4" fill="#21a366"/>
<rect x="20" y="22" width="13" height="4" fill="#107c41"/>
<rect x="20" y="26" width="13" height="4" fill="#185c37"/>
<path d="M26.5 17.8 H27.7 V27.7 H20 V26.5 H26.5 Z" fill="#0b5530"/>
<rect x="17" y="17" width="10" height="10" rx="0.8" fill="#107c41"/>
<path d="M19.9 19.7 L24.1 24.5 M24.1 19.7 L19.9 24.5" stroke="#fff" stroke-width="1.6"/>
<!-- toggle -->
<rect x="104.5" y="11.5" width="52" height="19" rx="9.5" fill="none" stroke="#5c5c5c" stroke-width="1"/>
<circle cx="116" cy="21" r="7" fill="#5c5c5c"/>
<!-- save -->
<g>
  <path d="M170.5 14.5 H185.5 V29.5 H172 L170.5 28 Z" fill="#d8a0df" stroke="#9b2ba6" stroke-width="1"/>
  <rect x="173.5" y="14.5" width="9" height="6" fill="#fafafa" stroke="#9b2ba6" stroke-width="1"/>
  <rect x="174.5" y="24.5" width="7.5" height="5" fill="#fafafa" stroke="#9b2ba6" stroke-width="1"/>
</g>
<!-- undo -->
<g fill="none" stroke="#3b3b3b" stroke-width="1.2" stroke-linecap="round" stroke-linejoin="round">
  <path d="M200.5 14.5 V20.5 H206.5"/>
  <path d="M200.8 20.2 L204.5 16.5 C207 14 211 14 213 16.5 C215 19 214 21.5 212 23.5 L205.5 29.5"/>
  <path d="M221 20.5 L223.5 23 L226 20.5"/>
</g>
<!-- redo -->
<g fill="none" stroke="#a6a6a6" stroke-width="1.2" stroke-linecap="round" stroke-linejoin="round">
  <path d="M252.5 14.5 V20.5 H246.5"/>
  <path d="M252.2 20.2 L248.5 16.5 C246 14 242 14 240 16.5 C238 19 239 21.5 241 23.5 L247.5 29.5"/>
  <path d="M259.5 20.5 L262.3 23 L265 20.5"/>
</g>
<!-- customize -->
<g fill="none" stroke="#1f1f1f" stroke-width="1.3" stroke-linecap="round" stroke-linejoin="round">
  <path d="M281.4 19.4 H287.6"/>
  <path d="M281.9 22.2 L284.5 24.7 L287.1 22.2"/>
</g>
<!-- title chevron -->
<path d="M368.5 20.5 L373.3 25 L378 20.5" fill="none" stroke="#2b2b2b" stroke-width="1.2" stroke-linecap="round" stroke-linejoin="round"/>
<!-- Home underline -->
<rect x="68" y="71" width="38" height="2" rx="1" fill="#0f7b3f"/>

<!-- ===== PASTE ===== -->
<rect x="31.5" y="89.5" width="20" height="23" fill="#fafafc" stroke="#e2700f" stroke-width="1"/>
<path d="M33 90.5 V111 H50.5 V90.5" fill="none" stroke="#f7d690" stroke-width="1.6"/>
<path d="M35.5 88.5 H38.5 C38.5 84.5 45 84.5 45 88.5 H47.5 V92.5 H35.5 Z" fill="#fff" stroke="#777" stroke-width="1"/>
<rect x="44.5" y="97.5" width="13" height="17" fill="#fafafa" stroke="#3c3c3c" stroke-width="1.2"/>
<path d="M39 141 L41.5 143.5 L44 141" fill="none" stroke="#333" stroke-width="1.1" stroke-linecap="round" stroke-linejoin="round"/>
<!-- scissors -->
<g fill="none" stroke-linecap="round">
  <path d="M74.3 84.5 C74.6 88 79.2 92 79.6 95.8" stroke="#4a4a4a" stroke-width="1.45"/>
  <path d="M79.6 84.5 C79.2 88 74.6 92 74.3 95.8" stroke="#4a4a4a" stroke-width="1.45"/>
  <rect x="72.1" y="96.1" width="3.9" height="3.9" rx="1.2" stroke="#1a86d8" stroke-width="1.4"/>
  <rect x="78" y="96.1" width="3.9" height="3.9" rx="1.2" stroke="#1a86d8" stroke-width="1.4"/>
</g>
<!-- copy -->
<g fill="none" stroke="#3b3b3b" stroke-width="1.2" stroke-linejoin="round">
  <path d="M73.6 123.4 H69.6 V110.4 H75 L76.4 111.6"/>
  <path d="M75.7 113.7 H81.3 L84.4 116.8 V125.3 H75.7 Z" fill="#fff"/>
  <path d="M81.3 113.7 V117 H84.4"/>
  <path d="M78.2 120.4 H82 M78.2 122.5 H82"/>
</g>
<!-- format painter -->
<g stroke-linejoin="round">
  <path d="M69.5 142.6 C72 141.5 74 140.5 75.7 139.6 L81.3 145.6 C79.5 147.5 77.5 149.5 75.7 150.8 Z" fill="#fff" stroke="#e2700f" stroke-width="1.3"/>
  <path d="M72 146.2 L79.6 147.2 L75.9 150.2 Z" fill="#f7cf6a" stroke="#e2700f" stroke-width="0.8"/>
  <path d="M76 139.2 L77.6 137.8 L83 143.2 L81.6 144.8 Z" fill="#fff" stroke="#3b3b3b" stroke-width="1.2"/>
  <path d="M79 140 L82.6 136.4 C83.2 135.8 84.2 135.8 84.8 136.4 C85.4 137 85.4 138 84.8 138.6 L81.2 142.2" fill="#fff" stroke="#3b3b3b" stroke-width="1.2"/>
</g>
<!-- dialog launchers -->
<g fill="none" stroke="#1f1f1f" stroke-width="1" stroke-linecap="square">
  <path d="M172.5 168.5 V162.5 H178.5 M175.5 165.5 L179 169 M179.5 165.5 V169.5 H175.5"/>
  <path d="M407.5 168.5 V162.5 H413.5 M410.5 165.5 L414 169 M414.5 165.5 V169.5 H410.5"/>
  <path d="M702.5 168.5 V162.5 H708.5 M705.5 165.5 L709 169 M709.5 165.5 V169.5 H705.5"/>
</g>

<!-- ===== FONT GROUP ===== -->
<g fill="none" stroke="#333" stroke-width="1.1" stroke-linecap="round" stroke-linejoin="round">
  <path d="M305.5 98.5 L308.5 101.5 L311.5 98.5"/>
  <path d="M350.5 98.5 L353.5 101.5 L356.5 98.5"/>
  <path d="M271.5 131 L274.5 134 L277.5 131"/>
  <path d="M315.5 131 L318.5 134 L321.5 131"/>
  <path d="M359.5 131 L362.5 134 L365.5 131"/>
  <path d="M400.5 131 L403.5 134 L406.5 131"/>
  <path d="M535 99 L537.5 101.5 L540 99"/>
  <path d="M693.5 131.5 L696.5 134.5 L699.5 131.5"/>
  <path d="M130 117.3 L132.7 120 L135.4 117.3"/>
</g>
<!-- grow / shrink A -->
<g fill="none" stroke="#2f2f2f" stroke-width="1.2" stroke-linecap="round" stroke-linejoin="round">
  <path d="M367.5 104.5 L372.5 92 L377.5 104.5 M369.3 100.2 H375.7"/>
  <path d="M395 104.5 L399 95 L403 104.5 M396.4 100.8 H401.6"/>
</g>
<g fill="none" stroke="#1a86d8" stroke-width="1.2" stroke-linecap="round" stroke-linejoin="round">
  <path d="M377.5 95.5 L379.5 93.3 L381.5 95.5"/>
  <path d="M403.5 93.5 L405.6 95.5 L407.7 93.5"/>
</g>
<!-- B I U -->
<text x="200.3" y="136" font-family="Liberation Sans" font-weight="bold" font-size="13" fill="#333">B</text>
<path d="M228.5 126.3 H233.5 M226.8 135.7 H231.8 M231 126.3 L229.3 135.7" fill="none" stroke="#333" stroke-width="1"/>
<path d="M252.5 126 V132.5 C252.5 136.5 258.5 136.5 258.5 132.5 V126 M251.2 137.4 H260" fill="none" stroke="#333" stroke-width="1.1"/>
<!-- borders icon -->
<g fill="#2a2a2a"><rect x="292" y="124" width="1" height="1"/><rect x="292" y="126" width="1" height="1"/><rect x="292" y="128" width="1" height="1"/><rect x="292" y="130" width="1" height="1"/><rect x="292" y="131" width="1" height="1"/><rect x="292" y="133" width="1" height="1"/><rect x="292" y="135" width="1" height="1"/><rect x="292" y="137" width="1" height="1"/><rect x="294" y="124" width="1" height="1"/><rect x="294" y="131" width="1" height="1"/><rect x="296" y="124" width="1" height="1"/><rect x="296" y="131" width="1" height="1"/><rect x="298" y="124" width="1" height="1"/><rect x="298" y="131" width="1" height="1"/><rect x="299" y="124" width="1" height="1"/><rect x="299" y="131" width="1" height="1"/><rect x="300" y="124" width="1" height="1"/><rect x="300" y="126" width="1" height="1"/><rect x="300" y="128" width="1" height="1"/><rect x="300" y="130" width="1" height="1"/><rect x="300" y="131" width="1" height="1"/><rect x="300" y="133" width="1" height="1"/><rect x="300" y="135" width="1" height="1"/><rect x="300" y="137" width="1" height="1"/><rect x="301" y="124" width="1" height="1"/><rect x="301" y="131" width="1" height="1"/><rect x="303" y="124" width="1" height="1"/><rect x="303" y="131" width="1" height="1"/><rect x="305" y="124" width="1" height="1"/><rect x="305" y="131" width="1" height="1"/><rect x="307" y="124" width="1" height="1"/><rect x="307" y="126" width="1" height="1"/><rect x="307" y="128" width="1" height="1"/><rect x="307" y="130" width="1" height="1"/><rect x="307" y="131" width="1" height="1"/><rect x="307" y="133" width="1" height="1"/><rect x="307" y="135" width="1" height="1"/><rect x="307" y="137" width="1" height="1"/></g>
<path d="M292 138.4 H307.3" stroke="#1f1f1f" stroke-width="1.4"/>
<!-- fill color -->
<path d="M343.8 125.9 L339 130.6 L343.1 134.6 L348 129.7" fill="#fff" stroke="#2e2e2e" stroke-width="1.15" stroke-linejoin="round" stroke-linecap="round"/>
<path d="M343.8 125.9 C343.8 123.6 345.7 123.6 345.7 125.4 V129.2" fill="none" stroke="#2e2e2e" stroke-width="1.15" stroke-linecap="round"/>
<path d="M347.2 128.3 C348.6 126.9 351 128.3 350.4 133.6 L349.5 134 C349.5 131.2 348.9 129.9 347.9 129.6 Z" fill="#1570c8"/>
<rect x="336" y="136" width="16" height="4" fill="#ffff00"/>
<!-- font color -->
<path d="M381 134.5 L385.3 124.2 L389.6 134.5 M382.6 130.8 H388" fill="none" stroke="#333" stroke-width="1.1" stroke-linecap="round" stroke-linejoin="round"/>
<rect x="377" y="136" width="16" height="4" fill="#ff0000"/>

<!-- ===== ALIGNMENT ===== -->
<g fill="none" stroke="#3a3a3a" stroke-width="1.2">
  <path d="M433 92.3 H447 M435.2 96.4 H444.9 M433 100.4 H447"/>
  <path d="M459 95.3 H473 M461 99.3 H470.9 M459 103.4 H473"/>
  <path d="M485 99.3 H499 M487.1 103.4 H496.9 M485 107.6 H499"/>
  <path d="M433 125.4 H447 M433 129.3 H443 M433 133.4 H447 M433 137.4 H443"/>
  <path d="M459.2 125.4 H473 M461 129.3 H471.1 M459.2 133.4 H473 M461 137.4 H471.1"/>
  <path d="M485 125.4 H499 M489 129.3 H499 M485 133.4 H499 M489 137.4 H499"/>
  <path d="M514.1 125.4 H528 M522.3 129.4 H528 M522.3 133.4 H528 M514.1 137.4 H528"/>
  <path d="M540.2 125.4 H553.9 M548.2 129.4 H553.9 M548.2 133.4 H553.9 M540.2 137.4 H553.9"/>
</g>
<g fill="none" stroke="#1a86d8" stroke-width="1.3" stroke-linecap="round" stroke-linejoin="round">
  <path d="M514.5 131.4 H520 M516.8 129.2 L514.5 131.4 L516.8 133.6"/>
  <path d="M540.5 131.4 H546 M543.7 129.2 L546 131.4 L543.7 133.6"/>
  <path d="M518.6 106.4 L528.6 96.4 M525 96.3 H528.7 V100" stroke-width="1.15"/>
  <path d="M591.6 100.6 C591.6 103.6 589.5 104.5 585.5 104.5 M588 101.8 L585.2 104.5 L588 107.2" stroke-width="1.5"/>
</g>
<text transform="translate(515.9,105) rotate(-45)" font-family="Liberation Sans" font-size="11.5" fill="#333">ab</text>
<!-- wrap text letters -->
<text x="578" y="99.9" font-family="Liberation Sans" font-size="10" fill="#3a3a3a">a</text>
<text x="584.6" y="99.9" font-family="Liberation Sans" font-size="10" fill="#3a3a3a">b</text>
<text x="578" y="107.2" font-family="Liberation Sans" font-size="10.5" fill="#3a3a3a">c</text>
<!-- merge icon -->
<g fill="none" stroke-width="1.1">
  <rect x="576.5" y="124.5" width="14" height="14" stroke="#3a3a3a"/>
  <path d="M583.5 124.5 V127.5 M583.5 135.5 V138.5" stroke="#3a3a3a"/>
  <rect x="576.5" y="127.5" width="14" height="8" stroke="#1a86d8" stroke-width="1.3" fill="#fff"/>
  <path d="M578.2 131.4 H589.2 M580.2 129.6 L578.2 131.4 L580.2 133.2 M587.2 129.6 L589.2 131.4 L587.2 133.2" stroke="#1a86d8" stroke-linecap="round" stroke-linejoin="round"/>
</g>

<!-- ===== FORMULA BAR ===== -->
<path d="M90.5 196 L95 200.5 L99.5 196" fill="none" stroke="#333" stroke-width="1.2" stroke-linecap="round" stroke-linejoin="round"/>
<g fill="#1a1a1a"><rect x="120" y="192" width="2" height="2"/><rect x="120" y="196" width="2" height="2"/><rect x="120" y="200" width="2" height="2"/></g>
<path d="M138.5 192.5 L149.5 202.5 M149.5 192.5 L138.5 202.5" stroke="#bdbdbd" stroke-width="1.1" stroke-linecap="round"/>
<path d="M160.5 197.5 L165 202 L175.5 192.5" fill="none" stroke="#bdbdbd" stroke-width="1.1" stroke-linecap="round" stroke-linejoin="round"/>
<path d="M185 203.9 C186.6 204.8 187.7 203.6 188.3 201.4 L191.2 192 C191.9 189.8 193.4 188.9 196 189.7" fill="none" stroke="#2b2b2b" stroke-width="1.45" stroke-linecap="round"/>
<path d="M188.6 194.6 H193.6" stroke="#2b2b2b" stroke-width="1.1"/>
<text x="192.5" y="202" font-family="Liberation Serif" font-style="italic" font-size="15.5" fill="#2b2b2b">x</text>
<path d="M204.5 195.5 L209.5 200.3 L214.5 195.5" fill="none" stroke="#a0a0a0" stroke-width="1.1" stroke-linecap="round" stroke-linejoin="round"/>
<!-- header corner triangle -->
<path d="M11.5 233 L23 221.5 V233 Z" fill="#d9d9d9"/>

</svg>
<div class="a" style="left:0;top:0;width:720px;height:3px;background:#b6e51c"></div>
<div class="a" style="left:0;top:688px;width:720px;height:3px;background:#b6e51c"></div>
<div class="a" style="left:0;top:0;width:3px;height:691px;background:#b6e51c"></div>
<div class="a" style="left:717px;top:0;width:3px;height:691px;background:#b6e51c"></div>
</body></html>
